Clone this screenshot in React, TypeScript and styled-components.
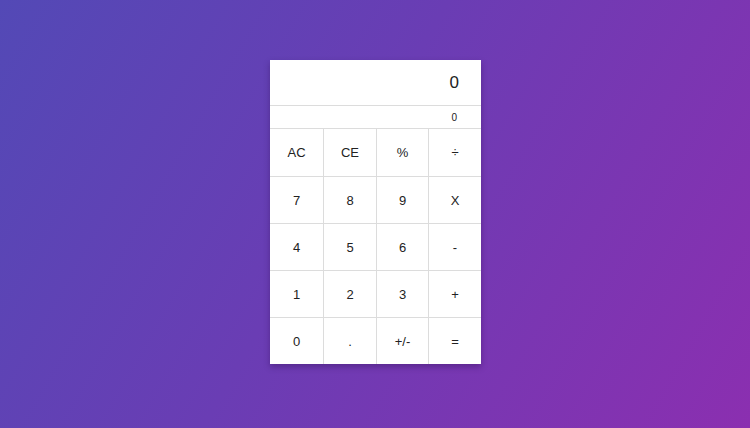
import React from "react";
import styled, { createGlobalStyle } from "styled-components";

const Global = createGlobalStyle`
  html, body { margin: 0; padding: 0; }
  body {
    width: 750px;
    height: 428px;
    overflow: hidden;
    font-family: "Liberation Sans", Arial, sans-serif;
    background: linear-gradient(120deg, #5349b6 0%, #6a3db4 45%, #8b2fb0 100%);
  }
`;

const Page = styled.div`
  width: 750px;
  height: 428px;
  display: flex;
  justify-content: center;
  align-items: flex-start;
  padding-top: 60px;
  box-sizing: border-box;
`;

const Calc = styled.div`
  width: 211px;
  margin-left: 1px;
  background: #fff;
  display: flex;
  flex-direction: column;
  box-shadow: 0 3px 6px rgba(40, 10, 70, 0.35);
`;

const Display = styled.div<{ $small?: boolean }>`
  height: ${(p) => (p.$small ? 22 : 45)}px;
  border-bottom: 1px solid #dcdcdc;
  display: flex;
  align-items: center;
  justify-content: flex-end;
  padding-right: ${(p) => (p.$small ? 24 : 22)}px;
  font-size: ${(p) => (p.$small ? 10 : 17)}px;
  color: #222;
`;

const Keys = styled.div`
  display: grid;
  grid-template-columns: 53px 52px 51px 52px;
  grid-template-rows: 47px repeat(4, 46px);
  gap: 1px;
  background: #dcdcdc;
`;

const Key = styled.button`
  border: none;
  background: #fff;
  font-family: "Liberation Sans", Arial, sans-serif;
  font-size: 13px;
  color: #222;
  padding: 0;
  display: flex;
  align-items: center;
  justify-content: center;
  cursor: pointer;
`;

const keys = [
  "AC", "CE", "%", "÷",
  "7", "8", "9", "X",
  "4", "5", "6", "-",
  "1", "2", "3", "+",
  "0", ".", "+/-", "=",
];

export default function App() {
  return (
    <>
      <Global />
      <Page>
        <Calc>
          <Display>0</Display>
          <Display $small>0</Display>
          <Keys>
            {keys.map((k) => (
              <Key key={k}>{k}</Key>
            ))}
          </Keys>
        </Calc>
      </Page>
    </>
  );
}
